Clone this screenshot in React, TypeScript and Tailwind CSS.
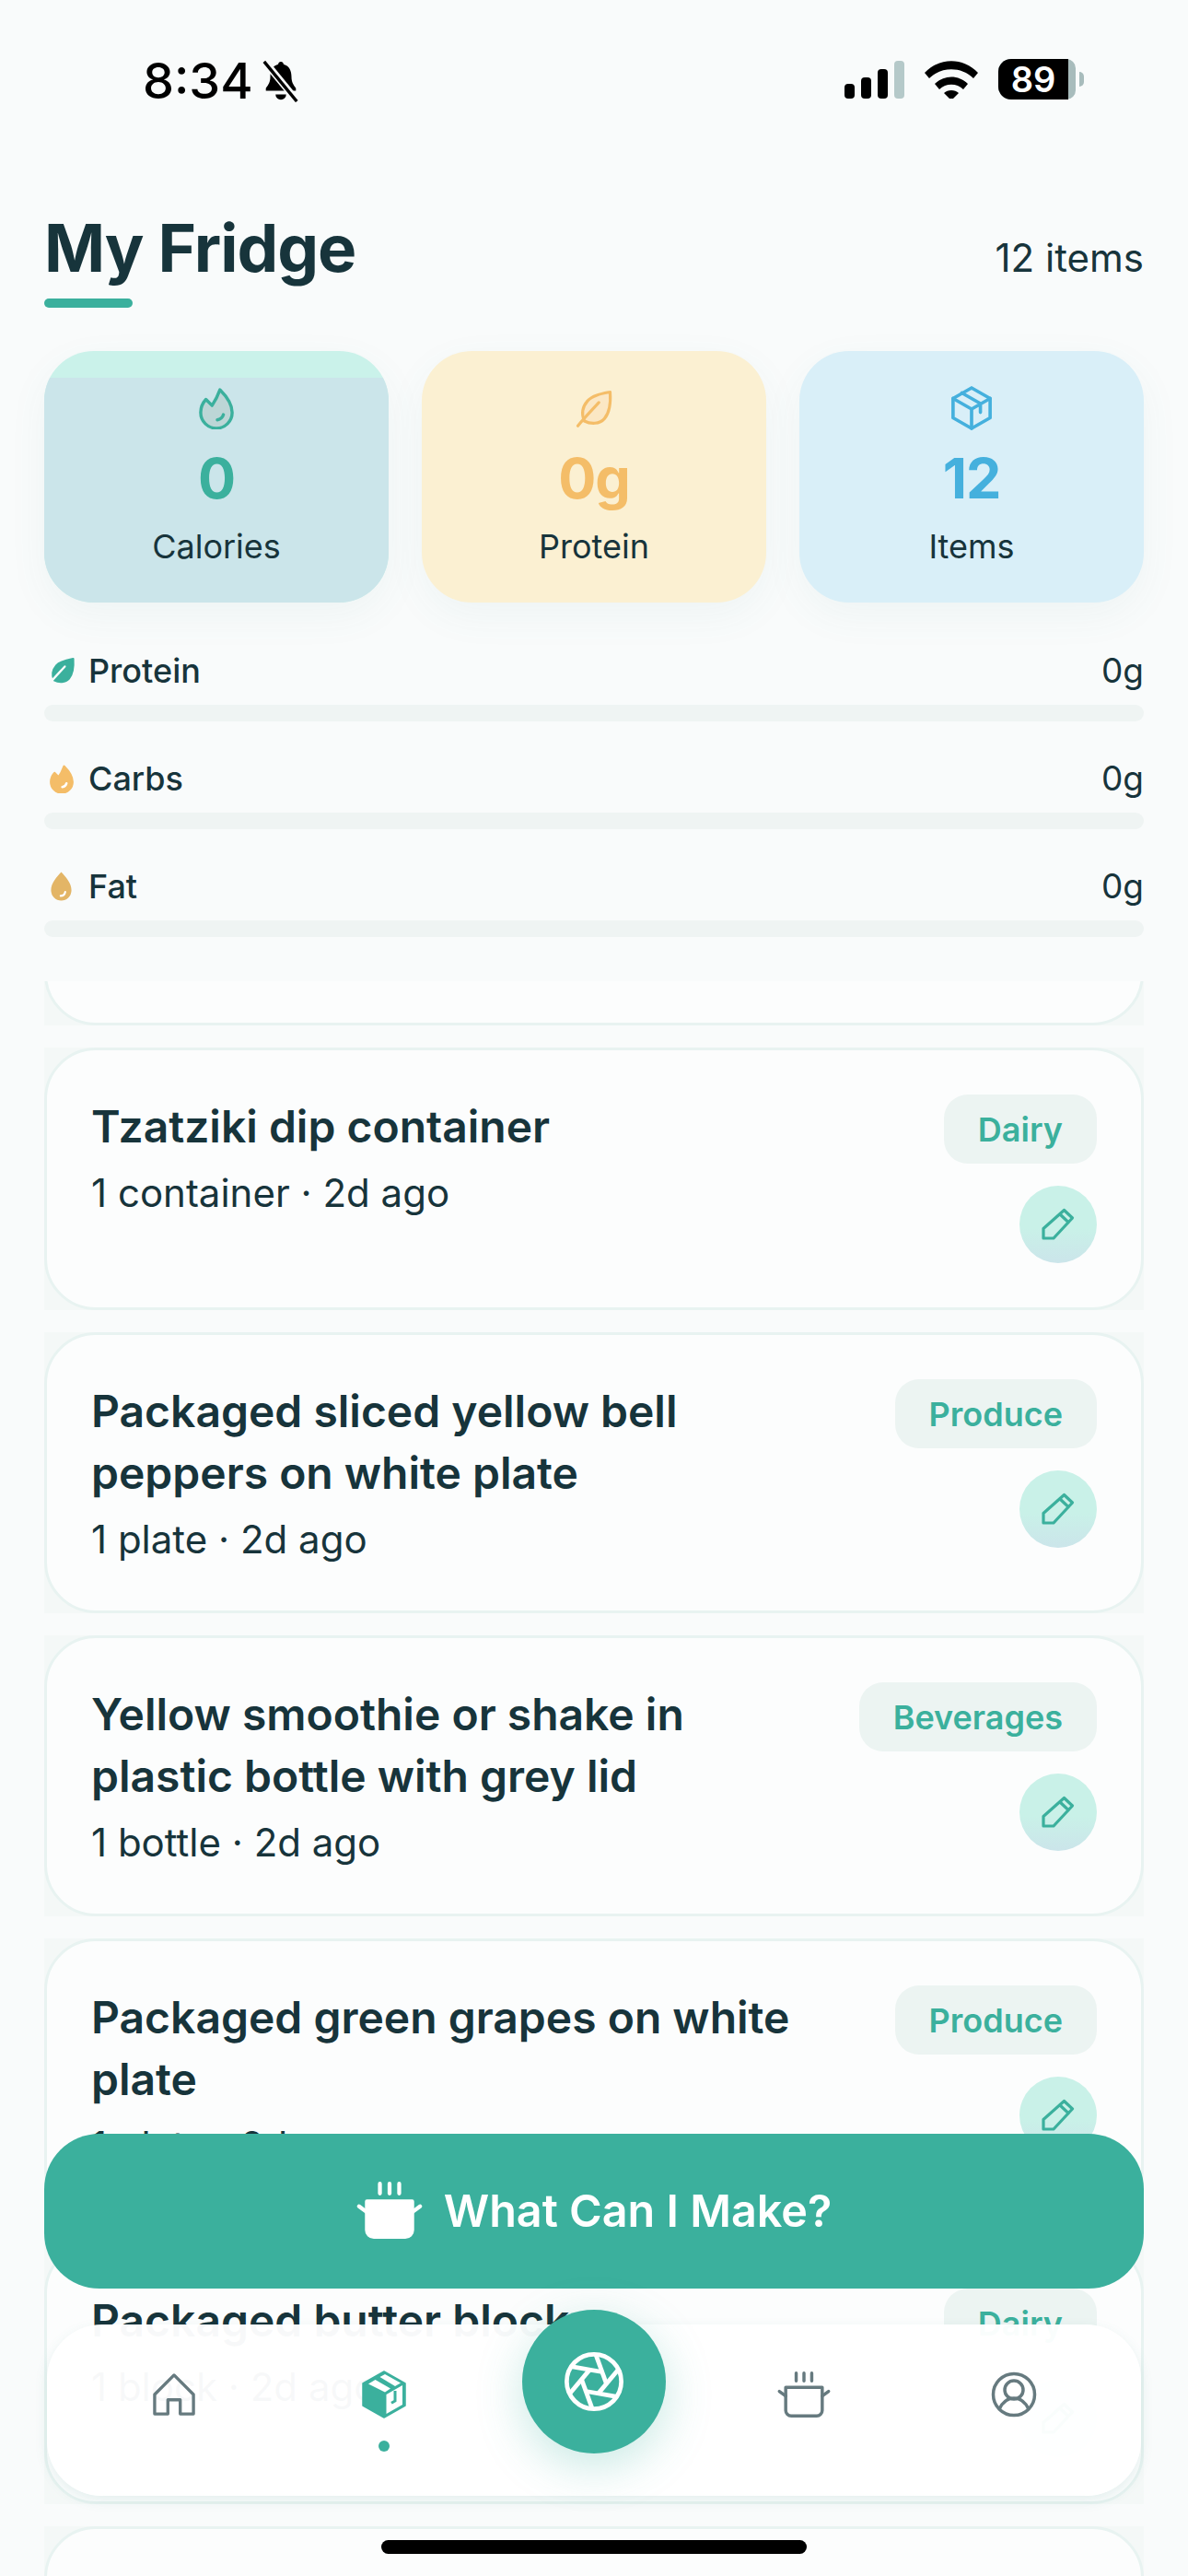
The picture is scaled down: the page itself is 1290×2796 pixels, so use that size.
import React from "react";

const F = { fontFamily: "Inter, 'Noto Sans', sans-serif" };

function Flame({ c, fill, sw = 2, inner, className }: { c: string; fill: string; sw?: number; inner?: string; className?: string }) {
  return (
    <svg viewBox="0 0 20 24" className={className} fill={fill} stroke={c} strokeWidth={sw} strokeLinejoin="round" strokeLinecap="round">
      <path d="M12 1.500C15.500 5 19 9.500 19 14.500a9 9 0 0 1-18 0c0-3 1.200-5.500 3-7.500l3.500 3.500C9.200 8 10.800 4.800 12 1.500z" />
      <path d="M10.500 18.700c1.500-.3 3-1.300 3.500-3" fill="none" stroke={inner ?? c} />
    </svg>
  );
}
function Leaf({ c, fill, inner, className }: { c: string; fill: string; inner?: string; className?: string }) {
  return (
    <svg viewBox="0 0 24 24" className={className} fill={fill} stroke={c} strokeWidth="1.800" strokeLinejoin="round" strokeLinecap="round">
      <path d="M22 2c.5 7.500-.5 13-3.500 16.500S10 22 6 20c-2-4.500-1-9 2-12.500S17 3 22 2z" />
      <path d="M2 23C6 18 10 14 15 8.500" fill="none" stroke={inner ?? c} />
    </svg>
  );
}
function Drop({ c, className }: { c: string; className?: string }) {
  return (
    <svg viewBox="0 0 20 26" className={className}>
      <path d="M10 .5C14 5 19 10 19 16.500a9 9 0 0 1-18 0C1 10 6 5 10 .5z" fill={c} />
      <path d="M9.500 21.500c2-.2 3.500-1.300 4-3.500" fill="none" stroke="#fff" strokeWidth="1.800" strokeLinecap="round" />
    </svg>
  );
}
function Box({ c, className }: { c: string; className?: string }) {
  return (
    <svg viewBox="0 0 24 25" className={className} fill="none" stroke={c} strokeWidth="1.900" strokeLinejoin="round" strokeLinecap="round">
      <path d="M12 1 22.500 7v11L12 24 1.500 18V7z" />
      <path d="M1.500 7 12 13 22.500 7M12 13v11M6.500 3.900l10.500 6v5" />
    </svg>
  );
}
function BoxSolid({ c, className }: { c: string; className?: string }) {
  return (
    <svg viewBox="0 0 48 52" className={className}>
      <path d="M24 1 47 14v24L24 51 1 38V14z" fill={c} stroke={c} strokeWidth="1.500" strokeLinejoin="round" />
      <path d="M7 14.500 14.500 10 31 19.500 25 23.500z" fill="#fff" />
      <path d="M19.500 7 25 4 42 13.500 36 17z" fill="#fff" />
      <path d="M26.500 26 44 16v21L26.500 47z" fill="#fff" />
      <path d="M36 22v11l-4 2.300" fill="none" stroke={c} strokeWidth="3" />
    </svg>
  );
}
function Pencil({ c, className }: { c: string; className?: string }) {
  return (
    <svg viewBox="0 0 36 36" className={className} fill="none" stroke={c} strokeWidth="3.200" strokeLinejoin="round" strokeLinecap="round">
      <path d="M24.500 2.500 33.500 11 13 33H2V22.500z" />
      <path d="M20 7l9 8.500" />
    </svg>
  );
}
function Pot({ c, solid, className }: { c: string; solid?: boolean; className?: string }) {
  return (
    <svg viewBox="0 0 67 58" className={className} fill="none" stroke={c} strokeWidth="4" strokeLinecap="round" strokeLinejoin="round">
      <path d="M10.500 20h46v29a7 7 0 0 1-7 7h-32a7 7 0 0 1-7-7z" fill={solid ? c : "none"} />
      <path d="M2.500 25l8 6M64.500 25l-8 6" />
      <path d="M23.700 2v10M33.500 2v10M43.300 2v10" />
    </svg>
  );
}

function Stat({ bg, icon, value, label, color, overlay }: { bg: string; icon: React.ReactNode; value: string; label: string; color: string; overlay?: boolean }) {
  return (
    <div className={`relative h-[273px] w-[374px] overflow-hidden rounded-[54px] shadow-[0_14px_44px_rgba(60,140,130,0.06)] ${bg}`}>
      {overlay && <div className="absolute inset-x-0 bottom-0 top-[29px] bg-[#cbe5ea]" />}
      <div className="relative flex flex-col items-center pt-[38px]">
        <div className="flex h-[48px] w-[48px] items-center justify-center">{icon}</div>
        <div className={`mt-[18px] text-[61px] leading-[68px] font-bold tracking-[-1px] ${color}`}>{value}</div>
        <div className="mt-[18px] text-[36px] leading-[44px] text-[#17343b]">{label}</div>
      </div>
    </div>
  );
}

function Macro({ icon, label }: { icon: React.ReactNode; label: string }) {
  return (
    <div>
      <div className="flex h-[42px] items-center justify-between">
        <div className="flex items-center gap-[14px]">
          <div className="ml-[3px] flex h-[32px] w-[31px] items-center justify-center">{icon}</div>
          <span className="text-[36px] font-medium text-[#17343b]">{label}</span>
        </div>
        <span className="text-[37px] text-[#17343b]">0g</span>
      </div>
      <div className="mt-[16px] h-[18px] rounded-full bg-[#eff4f3]" />
    </div>
  );
}

function Shell({ h, children }: { h: string; children?: React.ReactNode }) {
  return (
    <div className={`w-full bg-[#f4f8f7] ${h}`}>
      <div className="flex h-full w-full justify-between rounded-[56px] border-[3px] border-[#e8f3f1] bg-[#fcfdfd] pl-[48px] pr-[48px] pt-[48px]">{children}</div>
    </div>
  );
}

function Card({ title, sub, tag, h }: { title: string[]; sub: string; tag: string; h: string }) {
  return (
    <Shell h={h}>
      <div>
        <div className="pt-[1px] text-[48px] leading-[67px] font-semibold text-[#17343b]">
          {title.map((t) => (
            <div key={t}>{t}</div>
          ))}
        </div>
        <div className="mt-[13px] text-[42px] leading-[52px] text-[#17343b]">{sub}</div>
      </div>
      <div className="flex flex-col items-end">
        <div className="flex h-[75px] items-center rounded-[26px] bg-[#ecf4f2] px-[37px] text-[36px] font-semibold text-[#3bb09d]">{tag}</div>
        <div className="mt-[24px] flex h-[84px] w-[84px] items-center justify-center rounded-full bg-gradient-to-b from-[#c9f1e8] from-[55%] to-[#cbe5ea]">
          <Pencil c="#3bb09d" className="h-[36px] w-[36px]" />
        </div>
      </div>
    </Shell>
  );
}

export default function App() {
  return (
    <div style={F} className="relative h-[2796px] w-[1290px] overflow-hidden bg-[#f9fbfb] text-[#17343b]">
      {/* status bar */}
      <div className="flex h-[180px] items-start justify-between pl-[155px] pr-[113px] pt-[58px]">
        <div className="flex items-center gap-[8px] text-black">
          <span className="text-[54px] leading-[60px] font-medium">8:34</span>
          <svg viewBox="0 0 44 48" className="h-[46px] w-[44px]">
            <path d="M22 2c2 0 3 1.500 3 3 7 2 9 8 9 14 0 6 2 9 5 13v3H5v-3c3-4 5-7 5-13 0-6 2-12 9-14 0-1.500 1-3 3-3z" fill="#000" />
            <path d="M16 39h12a6 6 0 0 1-12 0z" fill="#000" />
            <path d="M3 1 40 46" stroke="#f9fbfb" strokeWidth="8" />
            <path d="M3 2 40 47" stroke="#000" strokeWidth="3.500" />
          </svg>
        </div>
        <div className="flex items-center gap-[22px] pt-[6px]">
          <div className="flex h-[41px] items-end gap-[7px]">
            <div className="h-[16px] w-[11px] rounded-[4px] bg-black" />
            <div className="h-[23px] w-[11px] rounded-[4px] bg-black" />
            <div className="h-[32px] w-[11px] rounded-[4px] bg-black" />
            <div className="h-[41px] w-[11px] rounded-[4px] bg-[#b5c9c9]" />
          </div>
          <svg viewBox="0 0 58 42" className="h-[42px] w-[58px]">
            <path d="M0 14C16-3 42-3 58 14l-5 6C40 7 18 7 5 20z" fill="#000" />
            <path d="M11 26c10-10 26-10 36 0l-5 6c-7-7-19-7-26 0z" fill="#000" />
            <path d="M21 36c4-4 12-4 16 0l-8 8z" fill="#000" />
          </svg>
          <div className="flex items-center">
            <div className="flex h-[44px] w-[84px] items-center rounded-l-[14px] rounded-r-[10px] bg-[#a8bcbc]">
              <div className="flex h-full w-[76px] items-center justify-center rounded-l-[14px] bg-black text-[38px] leading-[44px] font-semibold text-white">89</div>
            </div>
            <div className="ml-[4px] h-[16px] w-[5px] rounded-r-full bg-[#a8bcbc]" />
          </div>
        </div>
      </div>

      <div className="px-[48px]">
        {/* header */}
        <div className="flex items-start justify-between">
          <div>
            <h1 className="mt-[49px] text-[71px] leading-[80px] font-bold tracking-[-1px] text-[#17343b]">My Fridge</h1>
            <div className="mt-[15px] h-[10px] w-[96px] rounded-full bg-[#3bb09d]" />
          </div>
          <span className="mt-[75px] text-[42px] leading-[50px] text-[#17343b]">12 items</span>
        </div>

        {/* stats */}
        <div className="mt-[47px] flex justify-between">
          <Stat bg="bg-[#caf2ea]" overlay icon={<Flame c="#3bb09d" fill="#bcd6d6" sw={1.800} className="h-[46px] w-[38px]" />} value="0" label="Calories" color="text-[#3bb09d]" />
          <Stat bg="bg-[#fbf0d2]" icon={<Leaf c="#f4bd68" fill="#fbe7c4" className="h-[42px] w-[42px]" />} value="0g" label="Protein" color="text-[#f4bd68]" />
          <Stat bg="bg-[#d9eff8]" icon={<Box c="#45b0dd" className="h-[48px] w-[46px]" />} value="12" label="Items" color="text-[#45b0dd]" />
        </div>

        {/* macros */}
        <div className="mt-[53px] flex flex-col gap-[41px]">
          <Macro label="Protein" icon={<Leaf c="#3bb09d" fill="#3bb09d" inner="#f9fbfb" className="h-[32px] w-[32px]" />} />
          <Macro label="Carbs" icon={<Flame c="#f4bd68" fill="#f4bd68" inner="#fff" className="h-[31px] w-[26px]" />} />
          <Macro label="Fat" icon={<Drop c="#e3b566" className="h-[32px] w-[25px]" />} />
        </div>
      </div>

      {/* scrolling list */}
      <div className="absolute inset-x-[48px] bottom-0 top-[1065px] overflow-hidden">
        <div className="-mt-[78px] flex flex-col gap-[24px]">
          <Shell h="h-[126px]" />
          <Card title={["Tzatziki dip container"]} sub="1 container · 2d ago" tag="Dairy" h="h-[285px]" />
          <Card title={["Packaged sliced yellow bell", "peppers on white plate"]} sub="1 plate · 2d ago" tag="Produce" h="h-[305px]" />
          <Card title={["Yellow smoothie or shake in", "plastic bottle with grey lid"]} sub="1 bottle · 2d ago" tag="Beverages" h="h-[305px]" />
          <Card title={["Packaged green grapes on white", "plate"]} sub="1 plate · 2d ago" tag="Produce" h="h-[305px]" />
          <Card title={["Packaged butter block"]} sub="1 block · 2d ago" tag="Dairy" h="h-[285px]" />
          <Shell h="h-[285px]" />
        </div>
      </div>

      {/* CTA */}
      <button className="absolute left-[48px] top-[2316px] flex h-[168px] w-[1194px] items-center justify-center gap-[23px] rounded-[60px] bg-[#3bb09d] text-[48.500px] font-semibold text-white">
        <Pot c="#fff" solid className="-mt-[2px] h-[62px] w-[72px]" />
        What Can I Make?
      </button>

      {/* tab bar */}
      <div className="absolute left-[51px] top-[2523px] h-[186px] w-[1188px] rounded-[60px] bg-white/[.97] px-[24px] pt-[50px] shadow-[0_5px_14px_rgba(60,140,130,0.12)]">
        <div className="grid grid-cols-5">
          <div className="flex h-[52px] items-center justify-center">
            <svg viewBox="0 0 48 48" className="h-[46px] w-[46px]" fill="none" stroke="#667a7f" strokeWidth="3.500" strokeLinejoin="round">
              <path d="M24 2 46 24v22H31V30H17v16H2V24z" />
            </svg>
          </div>
          <div className="relative flex h-[52px] items-center justify-center">
            <BoxSolid c="#3bb09d" className="h-[52px] w-[48px]" />
            <div className="absolute left-[108px] top-[76px] h-[12px] w-[12px] rounded-full bg-[#3bb09d]" />
          </div>
          <div />
          <div className="flex h-[52px] items-center justify-center">
            <Pot c="#667a7f" className="h-[50px] w-[60px]" />
          </div>
          <div className="flex h-[52px] items-center justify-center">
            <svg viewBox="0 0 50 50" className="h-[50px] w-[50px]" fill="none" stroke="#667a7f" strokeWidth="3.500">
              <circle cx="25" cy="25" r="22.500" />
              <circle cx="25" cy="20" r="10" />
              <path d="M9 41c3-7 9-12 16-12s13 5 16 12" />
            </svg>
          </div>
        </div>
      </div>

      {/* shutter */}
      <div className="absolute left-[567px] top-[2507px] flex h-[156px] w-[156px] items-center justify-center rounded-full bg-[#3bb09d] shadow-[0_14px_50px_rgba(59,176,157,0.28)]">
        <svg viewBox="1.200 1.200 21.600 21.600" className="h-[64px] w-[64px]" fill="none" stroke="#fff" strokeWidth="1.600">
          <circle cx="12" cy="12" r="10" />
          <g transform="rotate(10 12 12) translate(24 0) scale(-1 1)">
            <path d="m14.310 8 5.740 9.940" />
            <path d="M9.690 8h11.480" />
            <path d="m7.380 12 5.740-9.940" />
            <path d="M9.690 16 3.950 6.060" />
            <path d="M14.310 16H2.830" />
            <path d="m16.620 12-5.740 9.940" />
          </g>
        </svg>
      </div>

      {/* home indicator */}
      <div className="absolute left-[414px] top-[2757px] h-[15px] w-[462px] rounded-full bg-black" />
    </div>
  );
}
